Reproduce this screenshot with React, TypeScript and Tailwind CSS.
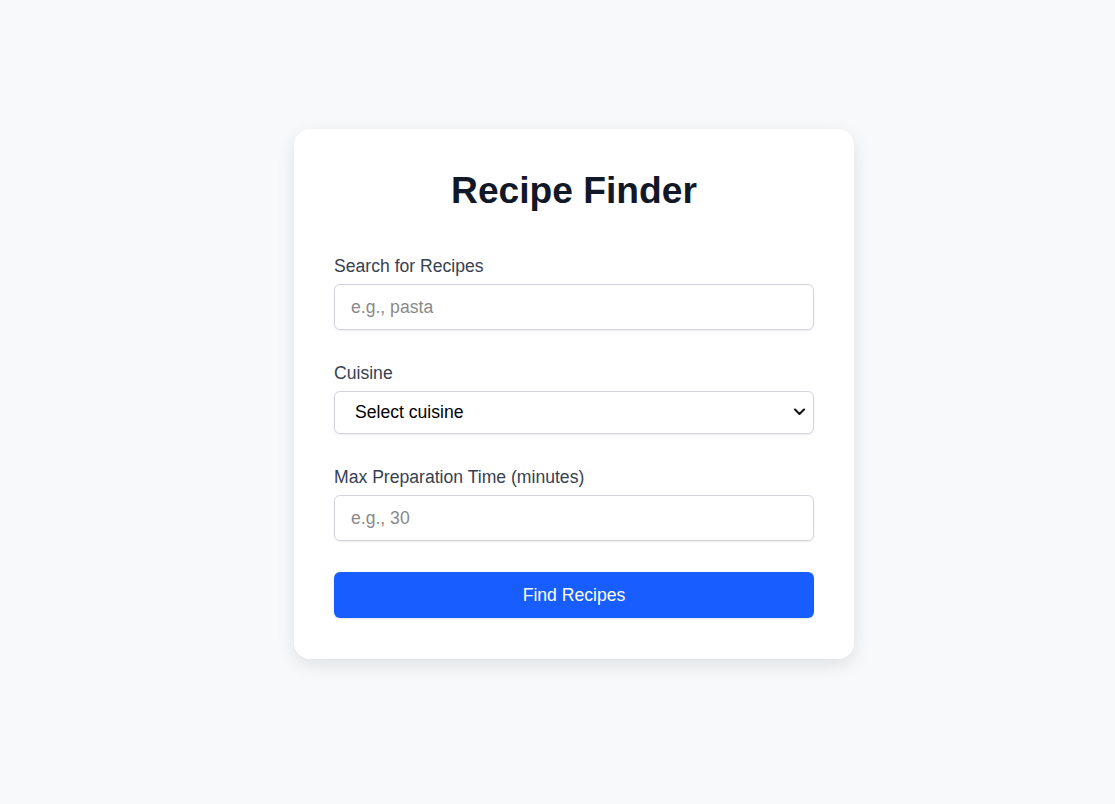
import React from "react";

export default function App() {
  return (
    <div className="min-h-[804px] bg-[#f8f9fb] pt-[129px] pl-[294px] font-['Liberation_Sans',Arial,sans-serif]">
      <div className="w-[560px] rounded-2xl bg-white p-10 pb-[41px] shadow-[0_6px_18px_rgba(0,0,0,0.1)]">
        <h1 className="text-center text-[37.2px] font-bold leading-[43px] text-[#111827]">Recipe Finder</h1>
        <div className="mt-[44px]">
          <label className="mb-2 block text-[17.6px] leading-[20px] text-[#374151]">Search for Recipes</label>
          <input
            type="text"
            placeholder="e.g., pasta"
            className="block h-[46px] w-full rounded-md border border-[#d1d5db] px-4 text-[17.6px] leading-[20px] text-[#111827] shadow-[0_1px_2px_rgba(0,0,0,0.08)] outline-none placeholder:text-[#8a8a8a]"
          />
        </div>
        <div className="mt-[33px]">
          <label className="mb-2 block text-[17.6px] leading-[20px] text-[#374151]">Cuisine</label>
          <div className="relative">
            <select className="block h-[43px] w-full appearance-none rounded-md border border-[#d1d5db] bg-white pl-5 pr-8 text-[17.6px] text-black shadow-[0_1px_2px_rgba(0,0,0,0.08)] outline-none">
              <option>Select cuisine</option>
            </select>
            <svg
              className="pointer-events-none absolute right-[9px] top-[17px]"
              width="11"
              height="8"
              viewBox="0 0 11 8"
              fill="none"
            >
              <path d="M1 1.5 L5.5 6 L10 1.5" stroke="#111" strokeWidth="2" strokeLinecap="round" strokeLinejoin="round" />
            </svg>
          </div>
        </div>
        <div className="mt-[33px]">
          <label className="mb-2 block text-[17.6px] leading-[20px] text-[#374151]">Max Preparation Time (minutes)</label>
          <input
            type="number"
            placeholder="e.g., 30"
            className="block h-[46px] w-full rounded-md border border-[#d1d5db] px-4 text-[17.6px] leading-[20px] text-[#111827] shadow-[0_1px_2px_rgba(0,0,0,0.08)] outline-none placeholder:text-[#8a8a8a]"
          />
        </div>
        <button className="mt-[31px] block h-[46px] w-full rounded-md bg-[#175dff] text-[17.6px] text-white shadow-[0_1px_2px_rgba(0,0,0,0.1)]">
          Find Recipes
        </button>
      </div>
    </div>
  );
}
